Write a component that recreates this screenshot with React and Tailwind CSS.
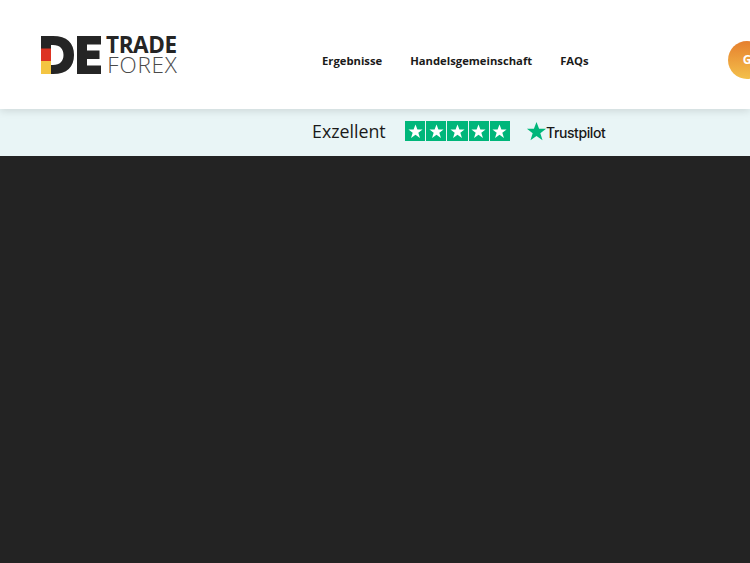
import React from 'react';

function Logo() {
  return (
    <div className="flex items-center gap-[5px] text-[#252525] font-['Open_Sans',sans-serif]">
      <svg width="60" height="38" viewBox="0 0 60 38" className="shrink-0">
        <path fillRule="evenodd" fill="#252525" d="M0 0H12C26 0 33 7 33 19C33 31 26 38 12 38H0ZM10 9V29H12C19 29 22.500 25 22.500 19C22.500 13 19 9 12 9Z" />
        <rect x="0" y="12.500" width="10" height="12.500" fill="#dd3322" />
        <rect x="0" y="25" width="10" height="13" fill="#f4c542" />
        <path fill="#252525" d="M36 0H60V8.500H46V14.500H58.500V23H46V29.500H60V38H36Z" />
      </svg>
      <div className="flex flex-col items-end leading-none">
        <span className="text-[22.500px] font-bold tracking-[-0.4px] leading-[20px]">TRADE</span>
        <span className="text-[22.500px] font-light tracking-[0.8px] text-[#4a4a4a] leading-[20px] -mr-[1px]">FOREX</span>
      </div>
    </div>
  );
}

function Nav() {
  return (
    <nav className="flex items-center gap-[28px] mt-[13px] text-[11.250px] font-bold text-[#1a1a1a] font-['Open_Sans',sans-serif]">
      <span>Ergebnisse</span>
      <span>Handelsgemeinschaft</span>
      <span>FAQs</span>
    </nav>
  );
}

function Star({ size, color }) {
  return (
    <svg width={size} height={size} viewBox="0 0 24 24">
      <path fill={color} d="M12 2l2.700 7.200H22l-6 4.600 2.300 7.400L12 16.700l-6.300 4.500L8 13.800 2 9.200h7.300z" />
    </svg>
  );
}

export default function App() {
  return (
    <div className="w-[750px] h-[563px] overflow-hidden flex flex-col bg-[#232323] font-['Open_Sans',sans-serif]">
      <header className="h-[109px] shrink-0 bg-white flex items-center overflow-hidden relative z-10 shadow-[0_2px_8px_rgba(0,0,0,0.12)]">
        <div className="ml-[41px] w-[281px] shrink-0">
          <Logo />
        </div>
        <Nav />
        <div className="ml-auto mr-[-16px] mt-[11px] w-[38px] h-[38px] rounded-full bg-gradient-to-b from-[#e57f2e] to-[#f3c04b] flex items-center justify-center">
          <span className="text-[12px] font-bold text-white">G</span>
        </div>
      </header>
      <div className="h-[47px] shrink-0 bg-[#e9f5f6] flex items-center pl-[312px]">
        <span className="text-[17.800px] text-[#1a1a1a] w-[93px] -mt-[3px]">Exzellent</span>
        <div className="flex gap-[1px] w-[105px] h-[20px] -mt-[3px]">
          {[0, 1, 2, 3, 4].map((i) => (
            <div key={i} className="w-[20.200px] h-[20px] bg-[#00b67a] flex items-center justify-center">
              <Star size={17} color="#ffffff" />
            </div>
          ))}
        </div>
        <div className="ml-[15px] -mt-[3px] flex items-center">
          <Star size={23} color="#00b67a" />
          <span className="text-[14px] font-medium text-[#191919] tracking-[-0.4px] font-['Inter',sans-serif] ml-[-2px] mt-[2px]">Trustpilot</span>
        </div>
      </div>
      <main className="flex-1 bg-[#232323]" />
    </div>
  );
}
